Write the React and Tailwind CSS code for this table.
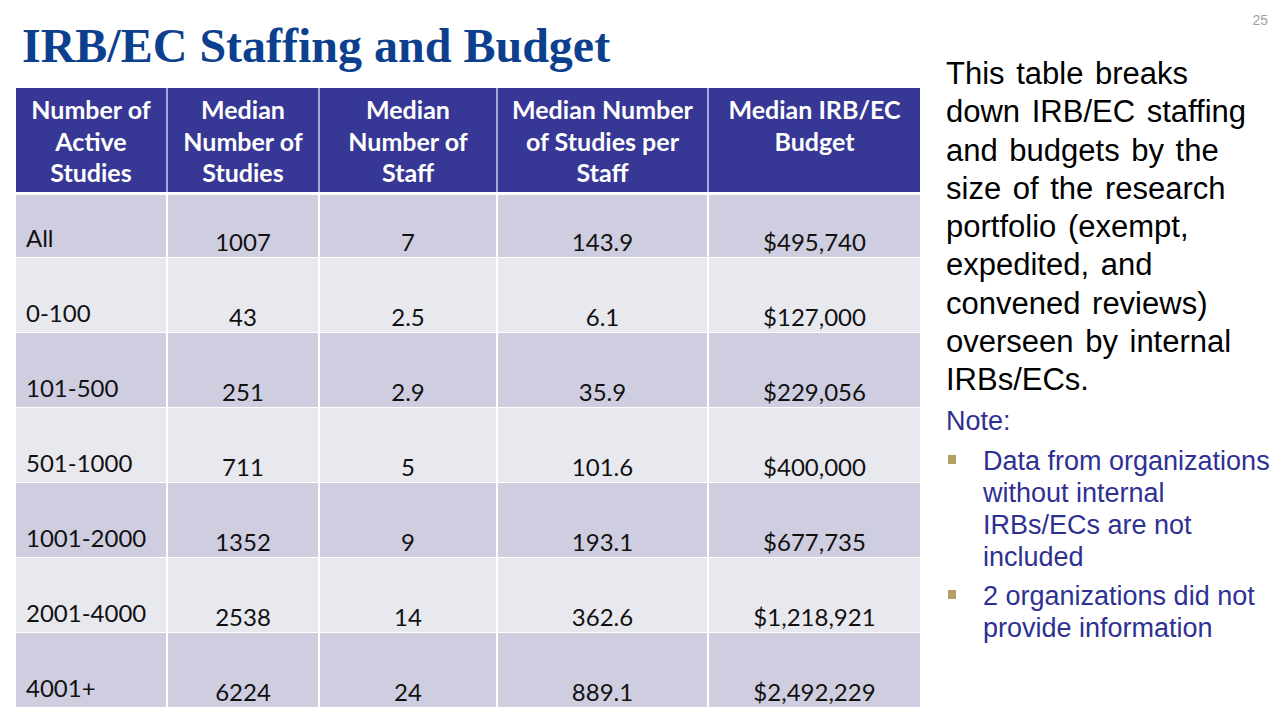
import React from "react";

const rows = [
  { range: "All", studies: "1007", staff: "7", perStaff: "143.9", budget: "$495,740" },
  { range: "0-100", studies: "43", staff: "2.5", perStaff: "6.1", budget: "$127,000" },
  { range: "101-500", studies: "251", staff: "2.9", perStaff: "35.9", budget: "$229,056" },
  { range: "501-1000", studies: "711", staff: "5", perStaff: "101.6", budget: "$400,000" },
  { range: "1001-2000", studies: "1352", staff: "9", perStaff: "193.1", budget: "$677,735" },
  { range: "2001-4000", studies: "2538", staff: "14", perStaff: "362.6", budget: "$1,218,921" },
  { range: "4001+", studies: "6224", staff: "24", perStaff: "889.1", budget: "$2,492,229" },
];

const headers = [
  ["Number of", "Active", "Studies"],
  ["Median", "Number of", "Studies"],
  ["Median", "Number of", "Staff"],
  ["Median Number", "of Studies per", "Staff"],
  ["Median IRB/EC", "Budget"],
];

const cols = "grid grid-cols-[150px_150px_176px_209px_211px] gap-x-[2px]";

const App = () => {
  return (
    <div className="relative w-[1280px] h-[720px] bg-white overflow-hidden flex">
      {/* Slide number */}
      <div className="absolute top-[10px] right-[12px] text-[14px] text-[#a3a3a3] font-['Liberation_Sans',sans-serif]">
        25
      </div>

      {/* Left: title + table */}
      <div className="pl-[16px] pt-[22px] w-[920px] flex flex-col">
        <h1 className="pl-[6px] text-[48px] leading-none font-bold text-[#0c3f8e] font-['Liberation_Serif',serif] whitespace-nowrap">
          IRB/EC Staffing and Budget
        </h1>

        <div className="mt-[18px] w-[904px] bg-white font-['Lato',sans-serif]">
          {/* Header */}
          <div className={`${cols} bg-[#a9a9d6]`}>
            {headers.map((lines, i) => (
              <div
                key={i}
                className="h-[104px] bg-[#373895] pt-[6px] flex flex-col items-center text-white font-bold text-[25px] leading-[31.5px]"
              >
                {lines.map((l) => (
                  <span key={l} className="whitespace-nowrap">{l}</span>
                ))}
              </div>
            ))}
          </div>

          {/* Body */}
          <div className="mt-[3px] flex flex-col gap-y-px">
            {rows.map((r, i) => (
              <div key={r.range} className={cols}>
                {[r.range, r.studies, r.staff, r.perStaff, r.budget].map((v, j) => (
                  <div
                    key={j}
                    className={`${i === 0 ? "h-[62px]" : "h-[74px]"} ${
                      i % 2 === 0 ? "bg-[#cfcee0]" : "bg-[#e8e8ef]"
                    } flex items-end text-[24px] leading-[28px] text-[#111111] ${
                      j === 0 ? "pl-[10px] pb-[5px]" : "justify-center pb-[1px]"
                    }`}
                  >
                    {v}
                  </div>
                ))}
              </div>
            ))}
          </div>
        </div>
      </div>

      {/* Right: description + notes */}
      <div className="pl-[26px] pt-[55px] flex flex-col font-['Liberation_Sans',sans-serif]">
        <p className="w-[310px] text-[31px] leading-[38.3px] text-black [word-spacing:3px]">
          This table breaks down IRB/EC staffing and budgets by the size of the research portfolio (exempt,
          expedited, and convened reviews) overseen by internal IRBs/ECs.
        </p>

        <div className="mt-[5px] text-[27px] leading-[32px] text-[#2e3192]">
          <div>Note:</div>
          <ul className="mt-[8px] flex flex-col gap-y-[7px]">
            <li className="flex">
              <span className="mt-[10px] ml-[2px] w-[8px] h-[9px] bg-[#b59f63] shrink-0"></span>
              <span className="ml-[27px] w-[290px]">
                Data from organizations without internal IRBs/ECs are not included
              </span>
            </li>
            <li className="flex">
              <span className="mt-[10px] ml-[2px] w-[8px] h-[9px] bg-[#b59f63] shrink-0"></span>
              <span className="ml-[27px] w-[290px]">2 organizations did not provide information</span>
            </li>
          </ul>
        </div>
      </div>
    </div>
  );
};

export default App;
